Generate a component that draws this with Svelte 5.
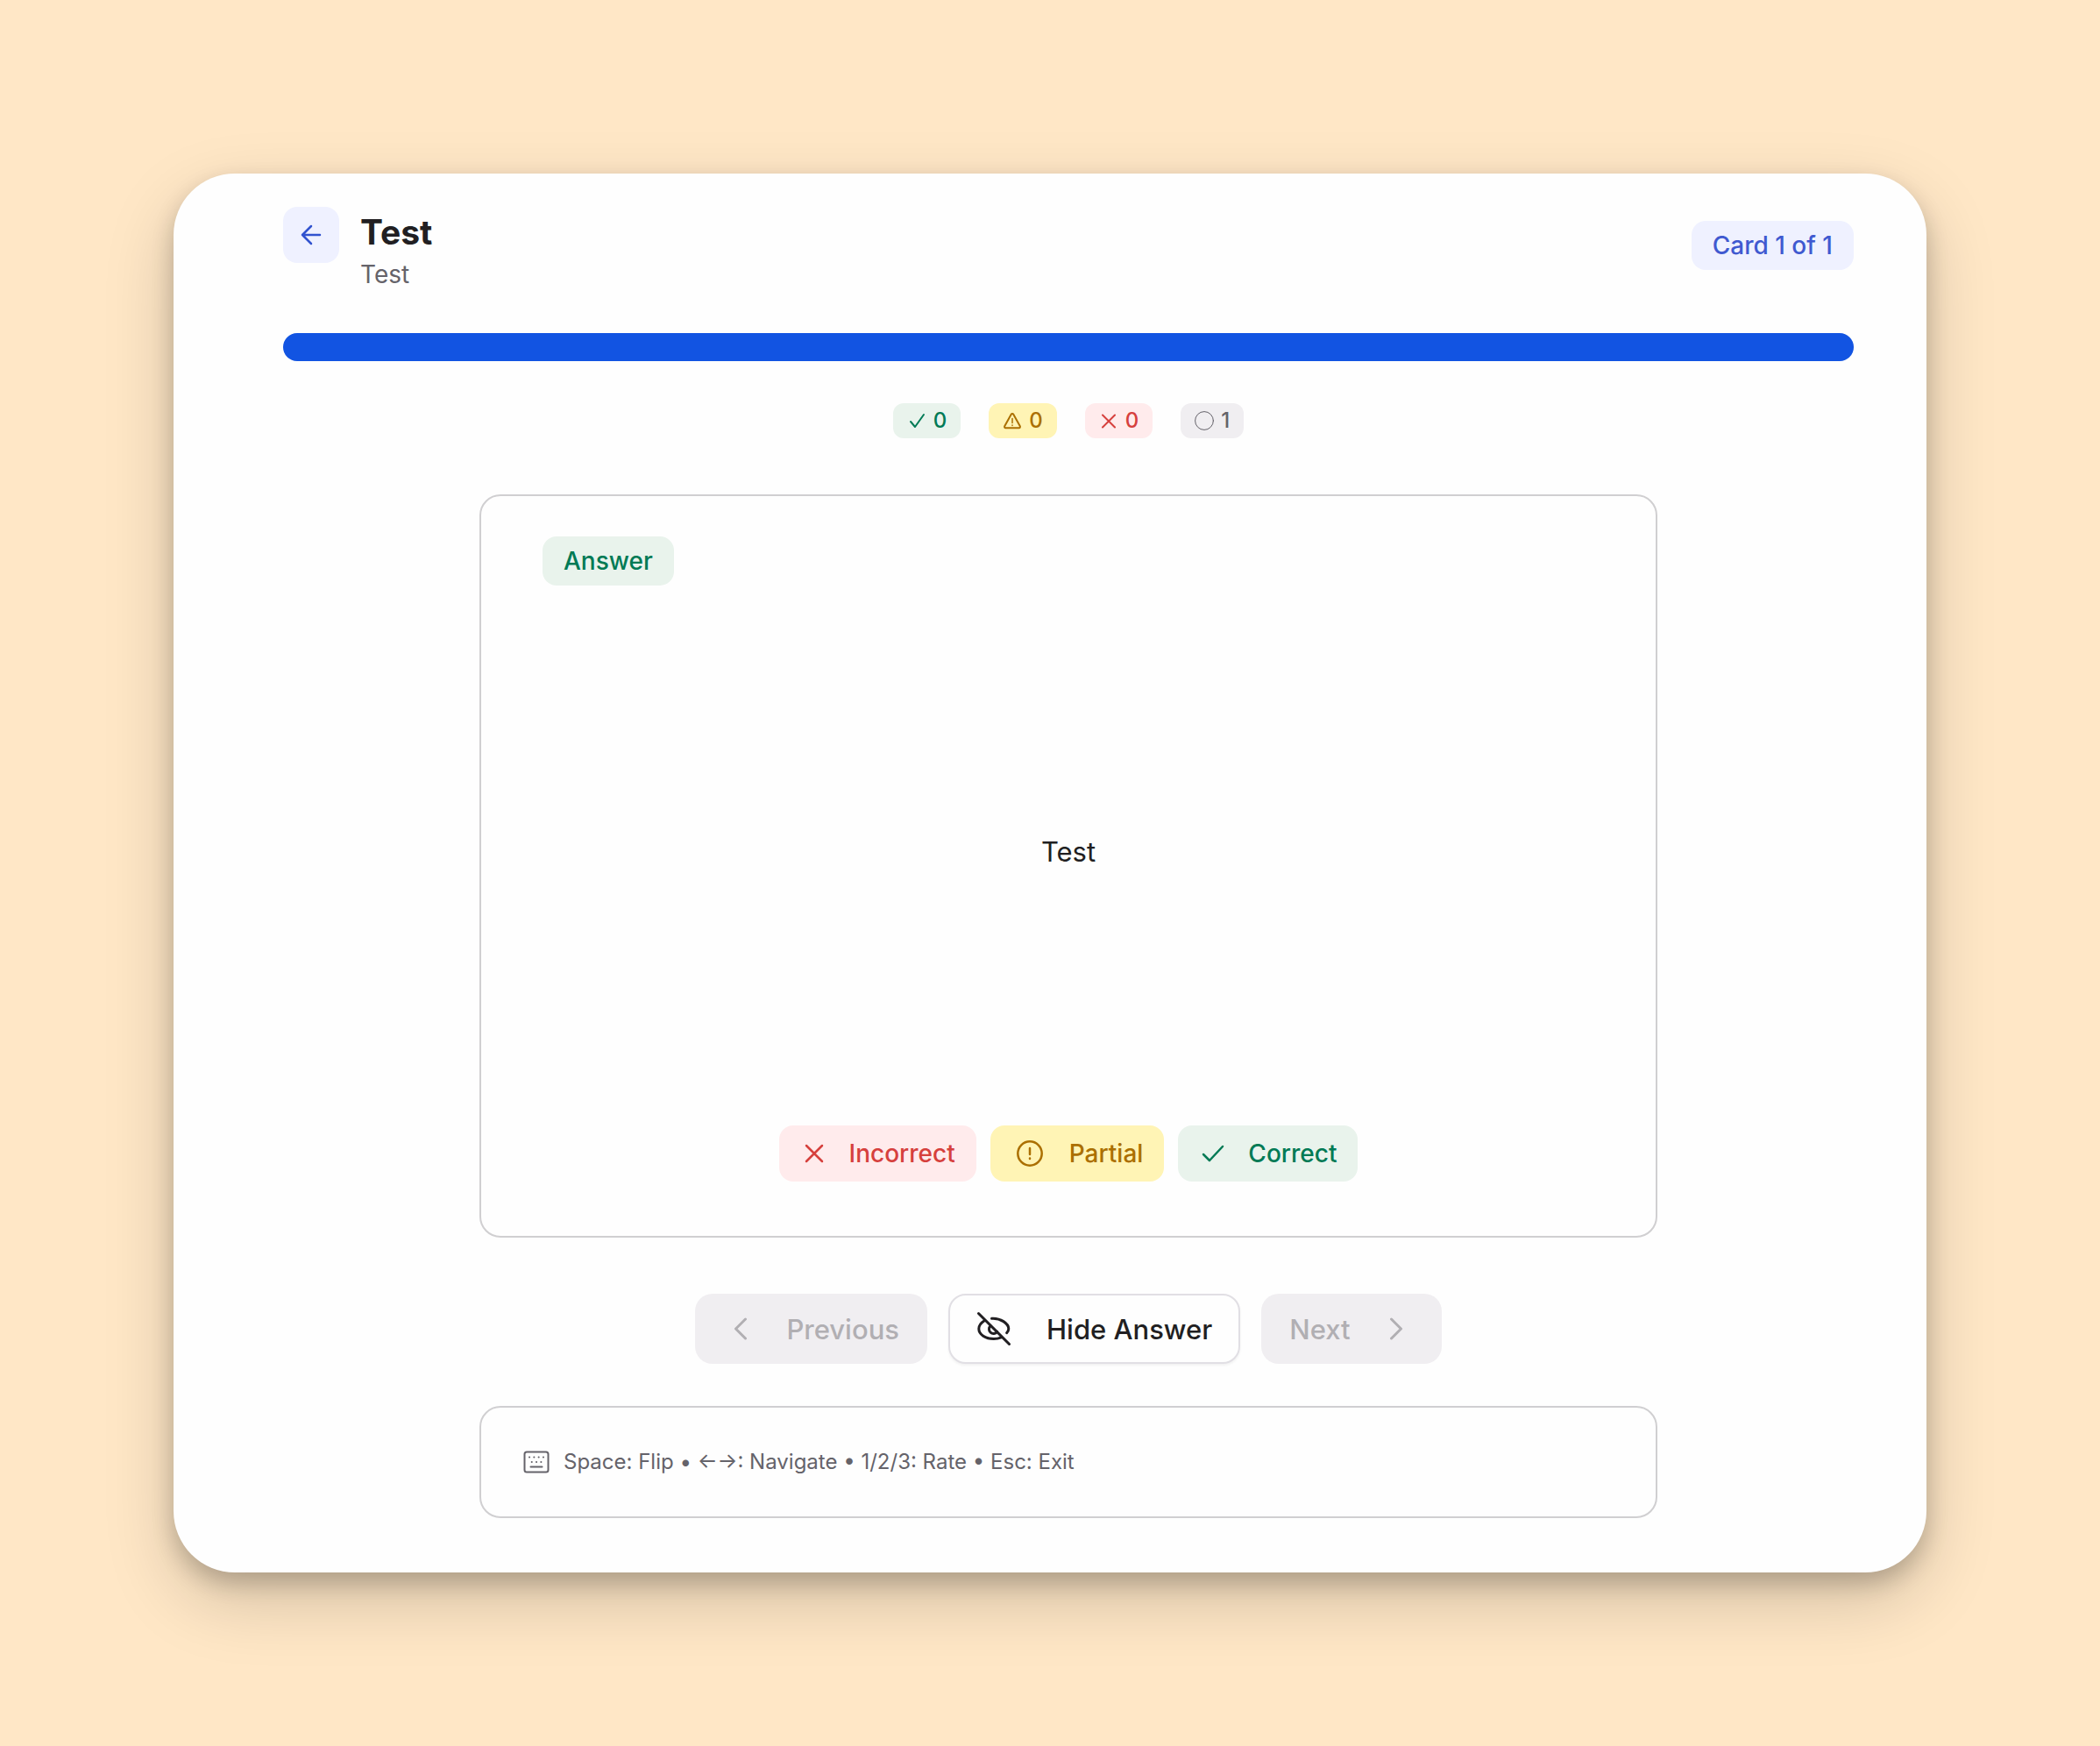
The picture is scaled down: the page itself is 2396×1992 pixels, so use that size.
<script>
	let answerShown = $state(true)

	const card = { current: 1, total: 1, front: "Test", back: "Test" }
	const progress = $derived((card.current / card.total) * 100)
</script>

<main class="page">
	<div class="panel">
		<header class="header">
			<button class="back" aria-label="Back">
				<svg width="32" height="32" viewBox="0 0 32 32">
					<path d="M26 16H6M16 6 6 16l10 10" />
				</svg>
			</button>
			<div class="heading">
				<h1 class="title">Test</h1>
				<p class="subtitle">Test</p>
			</div>
			<span class="badge badge--blue counter">Card {card.current} of {card.total}</span>
		</header>

		<div
			class="progress"
			role="progressbar"
			aria-label="Progress"
			aria-valuenow={progress}>
			<div class="progress__bar" style="width: {progress}%"></div>
		</div>

		<ul class="stats">
			<li class="stat badge--green">
				<svg width="22" height="24" viewBox="0 0 22 24">
					<path d="m4 13 5 6L19 5" />
				</svg>
				0
			</li>
			<li class="stat badge--yellow">
				<svg width="22" height="24" viewBox="0 0 22 24">
					<path
						d="M9.700 4.700 2.200 18.300a1.400 1.400 0 0 0 1.200 2h15.200a1.400 1.400 0 0 0 1.200-2L12.300 4.700a1.500 1.500 0 0 0-2.600 0Z" />
					<path class="thin" d="M11 9.500v5M11 17v.500" />
				</svg>
				0
			</li>
			<li class="stat badge--red">
				<svg width="22" height="24" viewBox="0 0 22 24">
					<path d="m4 5.500 14 14M18 5.500l-14 14" />
				</svg>
				0
			</li>
			<li class="stat badge--gray">
				<svg width="22" height="24" viewBox="0 0 22 24">
					<circle class="hairline" cx="11" cy="12" r="10.400" />
				</svg>
				1
			</li>
		</ul>

		<section class="flashcard">
			<span class="badge badge--green">{answerShown ? "Answer" : "Question"}</span>
			<p class="flashcard__text">{answerShown ? card.back : card.front}</p>
			<div class="ratings">
				<button class="rating badge--red">
					<svg width="32" height="32" viewBox="0 0 32 32">
						<path d="m7 7 18 18M25 7 7 25" />
					</svg>
					Incorrect
				</button>
				<button class="rating badge--yellow">
					<svg width="42" height="42" viewBox="0 0 42 42">
						<circle cx="21" cy="21" r="13.700" />
						<path d="M21 15v7M21 26.500v.500" />
					</svg>
					Partial
				</button>
				<button class="rating badge--green">
					<svg width="32" height="32" viewBox="0 0 32 32">
						<path d="m5 17 7 7L27 8" />
					</svg>
					Correct
				</button>
			</div>
		</section>

		<nav class="controls">
			<button class="control" disabled>
				<svg width="40" height="40" viewBox="0 0 40 40">
					<path d="M25.500 9 14.500 20l11 11" />
				</svg>
				Previous
			</button>
			<button
				class="control control--outline"
				onclick={() => (answerShown = !answerShown)}>
				<svg width="40" height="40" viewBox="0 0 40 40">
					<path d="m2.500 2.500 35 35" />
					<path
						d="M9.500 10.500C5.500 13 2.800 16.500 2.800 20c0 6.500 7.700 11.500 17 11.500 3.200 0 6-.6 8.500-1.700" />
					<path
						d="M17.500 8.300c10-.7 19.300 5.700 19.300 11.700 0 1.700-.8 3.200-2.200 4.700" />
					<path d="M16.200 16.700a5 5 0 1 0 7.400 6.600" />
				</svg>
				{answerShown ? "Hide Answer" : "Show Answer"}
			</button>
			<button class="control" disabled>
				Next
				<svg width="40" height="40" viewBox="0 0 40 40">
					<path d="m14.500 9 11 11-11 11" />
				</svg>
			</button>
		</nav>

		<aside class="hints">
			<svg width="30" height="26" viewBox="0 0 30 26">
				<rect x="1.500" y="1.500" width="27" height="23" rx="2.500" />
				<path
					d="M7 7.500h.1M12.300 7.500h.1M17.600 7.500h.1M22.900 7.500h.1M9.700 13h.1M15 13h.1M20.300 13h.1M8.500 18.500h13" />
			</svg>
			<span>Space: Flip • ←→: Navigate • 1/2/3: Rate • Esc: Exit</span>
		</aside>
	</div>
</main>

<style>
	:global(body) {
		background: #ffe7c6;
	}

	.page {
		padding: 198px;
		font-family: Inter, "Liberation Sans", sans-serif;
		color: #211f22;
	}

	.panel {
		display: flex;
		flex-direction: column;
		padding: 38px 83px 62px 125px;
		border-radius: 70px;
		background: #fefefe;
		box-shadow:
			0 12px 26px rgba(0, 0, 0, 0.2),
			0 30px 80px rgba(0, 0, 0, 0.18);
	}

	h1,
	p,
	ul {
		margin: 0;
		padding: 0;
	}

	button {
		border: 0;
		font: inherit;
		cursor: pointer;
	}

	button:disabled {
		cursor: default;
	}

	svg {
		flex: none;
		fill: none;
		stroke: currentColor;
		stroke-width: 2;
		stroke-linecap: round;
		stroke-linejoin: round;
	}

	.header {
		display: flex;
		align-items: flex-start;
		gap: 24px;
	}

	.back {
		display: flex;
		align-items: center;
		justify-content: center;
		width: 64px;
		height: 64px;
		padding: 0;
		border-radius: 16px;
		background: #eff1ff;
		color: #3253cf;
	}

	.back svg,
	.rating svg {
		stroke-width: 2.5;
	}

	.heading {
		flex: 1;
	}

	.title {
		font-size: 39px;
		line-height: 58px;
		font-weight: 700;
	}

	.subtitle {
		font-size: 28px;
		line-height: 38px;
		color: #65636a;
	}

	.badge {
		padding: 8px 24px;
		border-radius: 16px;
		font-size: 28px;
		line-height: 40px;
		font-weight: 500;
	}

	.counter {
		margin-top: 16px;
	}

	.badge--blue {
		background: #eff1ff;
		color: #4059d0;
	}

	.badge--green {
		background: #e9f3ec;
		color: #007a55;
	}

	.badge--yellow {
		background: #fff4b5;
		color: #ab6f00;
	}

	.badge--red {
		background: #ffebec;
		color: #d6403d;
	}

	.badge--gray {
		background: #f0eef1;
		color: #65636a;
	}

	.progress {
		height: 32px;
		margin-top: 48px;
		border-radius: 16px;
		background: #f0eef1;
		overflow: hidden;
	}

	.progress__bar {
		height: 100%;
		background: #1254e2;
	}

	.stats {
		display: flex;
		justify-content: center;
		gap: 32px;
		margin-top: 48px;
		list-style: none;
	}

	.stat {
		display: flex;
		align-items: center;
		gap: 8px;
		padding: 0 16px;
		border-radius: 12px;
		font-size: 24px;
		line-height: 40px;
		font-weight: 500;
	}

	.thin {
		stroke-width: 1.5;
	}

	.hairline {
		stroke-width: 1;
	}

	.flashcard,
	.hints {
		box-sizing: border-box;
		width: 100%;
		max-width: 1344px;
		align-self: center;
		border: 2px solid #d0cfd1;
		border-radius: 24px;
	}

	.flashcard {
		display: flex;
		flex-direction: column;
		align-items: flex-start;
		min-height: 848px;
		margin-top: 64px;
		padding: 46px 70px 62px;
	}

	.flashcard__text {
		display: flex;
		flex: 1;
		align-items: center;
		align-self: center;
		margin-bottom: 8px;
		font-size: 31px;
		line-height: 48px;
	}

	.ratings {
		display: flex;
		align-self: center;
		gap: 16px;
	}

	.rating {
		display: flex;
		align-items: center;
		gap: 24px;
		height: 64px;
		padding: 0 24px;
		border-radius: 16px;
		font-size: 28px;
		font-weight: 500;
	}

	.controls {
		display: flex;
		justify-content: center;
		gap: 24px;
		margin-top: 64px;
	}

	.control {
		display: flex;
		align-items: center;
		gap: 32px;
		height: 80px;
		padding: 0 32px;
		border-radius: 20px;
		background: #f0eef1;
		color: #b1afb3;
		font-size: 31px;
		font-weight: 500;
	}

	.control svg {
		stroke-width: 3;
	}

	.control--outline {
		gap: 40px;
		padding: 0 30px;
		border: 2px solid #e1dfe4;
		background: #fefefe;
		color: #211f22;
		box-shadow: 0 2px 3px rgba(0, 0, 0, 0.05);
	}

	.hints {
		display: flex;
		align-items: center;
		gap: 16px;
		margin-top: 48px;
		padding: 42px 48px;
		color: #65636a;
		font-size: 24px;
		line-height: 40px;
	}
</style>
